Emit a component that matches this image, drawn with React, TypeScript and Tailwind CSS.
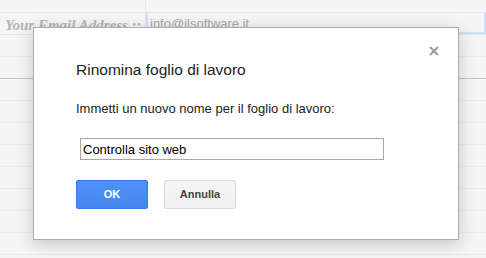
import { X } from "lucide-react"

const ROWS = [57, 79, 101, 123, 145, 167, 189, 211, 233, 255]

function Sheet() {
  return (
    <div className="relative h-[258px] w-[486px] overflow-hidden bg-[#f5f5f5]">
      <div className="flex h-[13px] border-b border-[#e6e6e6]">
        <div className="w-[146px] border-r border-[#e6e6e6]" />
        <div className="flex-1" />
      </div>
      <div className="flex h-[22px] border-b border-[#e6e6e6]">
        <div className="flex w-[146px] items-center overflow-hidden whitespace-nowrap border-r border-[#e6e6e6] pl-[5px] pt-[4px] font-['Liberation_Serif',serif] text-[15px] font-bold italic text-[#b4b4b4]">
          Your Email Address ::
        </div>
        <div className="flex flex-1 items-center border-2 border-t-0 border-[#cfdffb] pl-[2px] pt-[2px] font-['Liberation_Sans',Arial,sans-serif] text-[13px] text-[#a8a8a8]">
          info@ilsoftware.it
        </div>
      </div>
      {ROWS.map((y, i) => (
        <div
          key={y}
          className={
            i === 1
              ? "h-[22px] border-b border-[#c4c4c4]"
              : "h-[22px] border-b border-[#ebebeb]"
          }
        />
      ))}
    </div>
  )
}

function RenameDialog() {
  return (
    <div className="absolute left-[33px] top-[27px] h-[213px] w-[426px] border border-[#acacac] bg-white px-[42px] pt-[32px] font-['Liberation_Sans',Arial,sans-serif] shadow-[0_4px_16px_rgba(0,0,0,0.2)]">
      <button className="absolute right-[17px] top-[16px] text-[#9a9a9a]">
        <X size={14} strokeWidth={3.2} />
      </button>
      <h2 className="text-[15.5px] leading-[20px] text-[#222]">Rinomina foglio di lavoro</h2>
      <p className="mt-[21px] text-[13px] leading-[16px] text-[#222]">
        Immetti un nuovo nome per il foglio di lavoro:
      </p>
      <input
        defaultValue="Controlla sito web"
        className="ml-[4px] mt-[21px] block h-[22px] w-[304px] border border-[#a9a9a9] px-[2px] text-[13px] text-black outline-none"
      />
      <div className="mt-[20px] flex gap-[16px]">
        <button className="h-[29px] w-[72px] rounded-[2px] border border-[#3079ed] bg-[linear-gradient(#4d90fe,#4787ed)] text-[11px] font-bold text-white">
          OK
        </button>
        <button className="h-[29px] w-[72px] rounded-[2px] border border-[#dcdcdc] bg-[linear-gradient(#f5f5f5,#f1f1f1)] text-[11px] font-bold text-[#444]">
          Annulla
        </button>
      </div>
    </div>
  )
}

export default function App() {
  return (
    <div className="relative h-[258px] w-[486px]">
      <Sheet />
      <RenameDialog />
    </div>
  )
}
